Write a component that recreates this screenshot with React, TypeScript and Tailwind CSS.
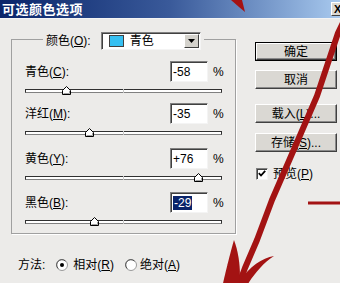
import React from "react";

const FONT = { fontFamily: '"Liberation Sans", "Noto Sans CJK SC", sans-serif' };

function Thumb({ v }: { v: number }) {
  const pos = 98.5 + (v / 100) * 98.5;
  return (
    <svg
      className="absolute top-[2px]"
      style={{ left: pos - 4.5 }}
      width="10"
      height="10"
      viewBox="0 0 10 10"
    >
      <polygon points="0.5,4.5 4.5,0.5 8.5,4.5 8.5,8.5 0.5,8.5" fill="#fff" stroke="#000" strokeWidth="1" />
      <polyline points="1.5,7.5 7.5,7.5 7.5,4.8" fill="none" stroke="#a0a0a0" strokeWidth="1" />
    </svg>
  );
}

function Row({
  label,
  k,
  value,
  v,
  selected,
  mt,
}: {
  label: string;
  k: string;
  value: string;
  v: number;
  selected?: boolean;
  mt: string;
}) {
  return (
    <div className={`flex flex-col ${mt}`}>
      <div className="flex items-center h-[21px]">
        <div className="flex-1 text-[12px] text-black leading-none">
          {label}(<u>{k}</u>):
        </div>
        <div className="w-[38px] h-[21px] bg-white border-t border-l border-[#808080] border-b border-r border-b-[#f4f4f4] border-r-[#f4f4f4] shadow-[inset_1px_1px_0_#404040] flex items-center pl-[2px]">
          {selected ? (
            <span className="bg-[#0a246a] text-white text-[12px] leading-[14px] px-[1px]">{value}</span>
          ) : (
            <span className="text-[12px] leading-[14px] text-black">{value}</span>
          )}
        </div>
        <div className="ml-[5px] w-[10px] text-[12px] text-black leading-none">%</div>
      </div>
      <div className="relative mt-[2px] h-[12px] w-[197px]">
        <div className="absolute left-0 right-0 top-[5px] h-[4px] border border-[#303030] border-b-[#808080] bg-white" />
        <div className="absolute left-[98px] top-[5px] h-[4px] w-[1px] bg-[#c8c8c8]" />
        <Thumb v={v} />
      </div>
    </div>
  );
}

function Btn({ children, def }: { children: React.ReactNode; def?: boolean }) {
  return (
    <div className={`h-[19px] w-[82px] ${def ? "border border-black" : ""}`}>
      <div className="h-full w-full bg-[#dad8d3] border-t border-l border-white border-b border-r border-b-[#404040] border-r-[#404040] shadow-[inset_-1px_-1px_0_#8a8a8a] flex items-center justify-center text-[12px] text-black leading-none">
        {children}
      </div>
    </div>
  );
}

function Radio({ on }: { on?: boolean }) {
  return (
    <svg width="12" height="12" viewBox="0 0 12 12">
      <circle cx="6" cy="6" r="5.5" fill="#fff" stroke="#9a9a9a" />
      <path d="M2.2 9.5 A5 5 0 0 1 9.5 2.2" fill="none" stroke="#505050" />
      {on && <circle cx="6" cy="6" r="2" fill="#000" />}
    </svg>
  );
}

export default function App() {
  return (
    <div className="relative w-[340px] h-[283px] overflow-hidden bg-[#ecebe9]" style={FONT}>
      {/* title bar */}
      <div className="h-[18px] flex items-center bg-gradient-to-r from-[#0a246a] via-[#3a5a9a] to-[#a8c9ee]">
        <div className="ml-[2px] text-[13px] font-bold text-white leading-none tracking-[0.5px]">可选颜色选项</div>
        <div className="ml-auto mr-[-8px] w-[17px] h-[14px] bg-[#dad8d3] border-t border-l border-white border-b border-r border-b-[#404040] border-r-[#404040] flex items-center justify-start pl-[2px] text-[11px] font-bold text-black leading-none">
          X
        </div>
      </div>
      <div className="h-[1px] bg-[#f4f4f4]" />

      {/* body */}
      <div className="flex flex-col">
        <div className="flex">
          <fieldset className="ml-[11px] mt-[11px] w-[225px] border border-[#a0a0a0] pl-[13px] pr-[12px] pt-[13px] pb-[6px] shadow-[1px_1px_0_#ffffff]">
            <legend className="ml-[18px] px-[3px] h-[18px]">
              <div className="flex items-center translate-y-[2px] h-[18px] bg-[#ecebe9]">
                <div className="text-[12px] text-black leading-none">
                  颜色(<u>O</u>):
                </div>
                <div className="ml-[10px] w-[100px] h-[18px] bg-white border-t border-l border-[#808080] border-b border-r border-b-[#f4f4f4] border-r-[#f4f4f4] shadow-[inset_1px_1px_0_#404040] flex items-center">
                  <div className="ml-[7px] w-[15px] h-[12px] bg-[#36c0f2] border border-[#404040]" />
                  <div className="ml-[6px] text-[12px] text-black leading-none">青色</div>
                  <div className="ml-auto mr-[1px] w-[15px] h-[14px] bg-[#d4d2cc] border-t border-l border-white border-b border-r border-b-[#404040] border-r-[#404040] flex items-center justify-center">
                    <svg width="7" height="4" viewBox="0 0 7 4">
                      <polygon points="0,0 7,0 3.5,4" fill="#000" />
                    </svg>
                  </div>
                </div>
              </div>
            </legend>
            <Row label="青色" k="C" value="-58" v={-58} mt="mt-0" />
            <Row label="洋红" k="M" value="-35" v={-35} mt="mt-[7px]" />
            <Row label="黄色" k="Y" value="+76" v={76} mt="mt-[10px]" />
            <Row label="黑色" k="B" value="-29" v={-29} mt="mt-[9px]" selected />
          </fieldset>

          <div className="ml-[19px] pt-[23px] flex flex-col">
            <Btn def>确定</Btn>
            <div className="mt-[9px]">
              <Btn>取消</Btn>
            </div>
            <div className="mt-[15px]">
              <Btn>
                载入(<u>L</u>)...
              </Btn>
            </div>
            <div className="mt-[10px]">
              <Btn>
                存储(<u>S</u>)...
              </Btn>
            </div>
            <div className="mt-[15px] flex items-center h-[13px]">
              <div className="ml-[1px] w-[12px] h-[12px] bg-white border-t border-l border-[#808080] border-b border-r border-b-[#f4f4f4] border-r-[#f4f4f4] shadow-[inset_1px_1px_0_#404040] flex items-center justify-center">
                <svg width="8" height="7" viewBox="0 0 8 7">
                  <polyline points="0.8,3.2 3,5.5 7.2,0.8" fill="none" stroke="#000" strokeWidth="1.8" />
                </svg>
              </div>
              <div className="ml-[5px] text-[12px] text-black leading-none">
                预览(<u>P</u>)
              </div>
            </div>
          </div>
        </div>

        <div className="mt-[23px] h-[16px] flex items-center">
          <div className="ml-[18px] text-[12px] text-black leading-none">方法:</div>
          <div className="ml-[11px] flex items-center">
            <Radio on />
          </div>
          <div className="ml-[5px] text-[12px] text-black leading-none">
            相对(<u>R</u>)
          </div>
          <div className="ml-[11px] flex items-center">
            <Radio />
          </div>
          <div className="ml-[3px] text-[12px] text-black leading-none">
            绝对(<u>A</u>)
          </div>
        </div>
      </div>

      {/* red arrow annotation overlay */}
      <svg className="absolute inset-0 pointer-events-none" width="340" height="283" viewBox="0 0 340 283">
        <polygon points="231,0 242,0 245,12 239,7" fill="#a51212" />
        <path
          d="M350 8 L338 33 L317 96 L298 140 L272 200 L257 240 L245 268 L236 292"
          fill="none"
          stroke="#a31313"
          strokeWidth="6"
          strokeLinejoin="round"
        />
        <path d="M234 240 C230 254 226 270 221 292 L239 292 C241 274 240 256 234 240 Z" fill="#a31313" />
        <path d="M274 256 C262 258 250 266 239 282 L246 287 C254 274 263 263 274 256 Z" fill="#a31313" />
        <rect x="308" y="201.5" width="40" height="3" fill="#a31313" />
      </svg>
    </div>
  );
}
